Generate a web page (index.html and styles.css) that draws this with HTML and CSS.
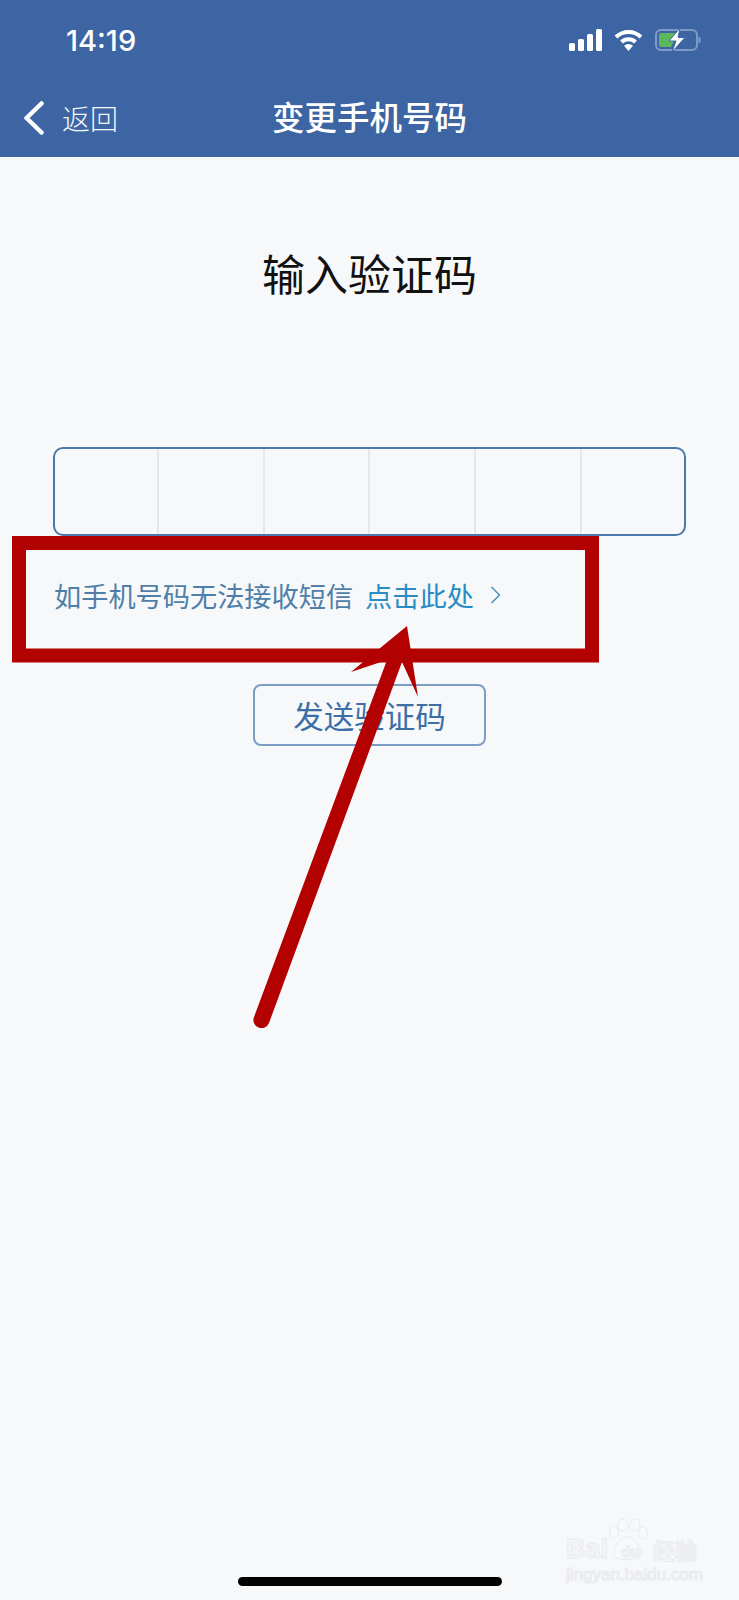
FILE: index.html
```html
<!DOCTYPE html>
<html lang="zh-CN">
<head>
  <meta charset="UTF-8" />
  <title>变更手机号码</title>
  <meta name="viewport" content="width=device-width, initial-scale=1.0"/>
  <link rel="stylesheet" href="styles.css">
</head>
<body>

<div class="screen">
  <header class="top">
    <div class="status-bar">
      <span class="time">14:19</span>
      <div class="status-icons">
        <svg class="icon-signal" width="33" height="22" viewBox="0 0 33 22">
          <rect x="0" y="14" width="6" height="8" rx="1.5"/>
          <rect x="9" y="10" width="6" height="12" rx="1.5"/>
          <rect x="18" y="5" width="6" height="17" rx="1.5"/>
          <rect x="27" y="0" width="6" height="22" rx="1.5"/>
        </svg>
        <svg class="icon-wifi" width="29" height="22" viewBox="0 0 29 22">
          <path d="M2 8 A18 18 0 0 1 27 8" />
          <path d="M7.5 13 A10.5 10.5 0 0 1 21.5 13" />
          <path class="wifi-dot" d="M14.5 22 L10 16.8 A6.5 6.5 0 0 1 19 16.8 Z"/>
        </svg>
        <svg class="icon-battery" width="47" height="24" viewBox="0 0 47 24">
          <rect class="batt-shell" x="1" y="2" width="41" height="20" rx="5"/>
          <path class="batt-fill" d="M6 5 H23 L16 19 H6 Q4 19 4 17 V7 Q4 5 6 5 Z"/>
          <path class="batt-cap" d="M44.5 9 V15"/>
          <path class="batt-bolt" d="M25 0 L14 13 H21 L17 24 L30 9.5 H23 Z"/>
        </svg>
      </div>
    </div>
    <nav class="nav-bar">
      <a class="back">
        <svg width="22" height="34" viewBox="0 0 22 34">
          <path d="M18.500 2.500 L3.500 17 L18.500 31.500"/>
        </svg>
        <span>返回</span>
      </a>
      <h1 class="nav-title">变更手机号码</h1>
    </nav>
  </header>

  <main class="content">
    <h2 class="heading">输入验证码</h2>

    <div class="code-box">
      <div class="code-cell"></div>
      <div class="code-cell"></div>
      <div class="code-cell"></div>
      <div class="code-cell"></div>
      <div class="code-cell"></div>
      <div class="code-cell"></div>
    </div>

    <div class="hint">
      <span>如手机号码无法接收短信</span>
      <a class="hint-link">点击此处</a>
      <svg class="hint-arrow" width="11" height="18" viewBox="0 0 11 18">
        <path d="M1.500 1 L9.500 9 L1.500 17"/>
      </svg>
    </div>

    <button class="send-btn">发送验证码</button>
  </main>

  <div class="home-bar"></div>

  <!-- annotation drawn on top of the screenshot -->
  <svg class="markup" width="739" height="1600" viewBox="0 0 739 1600">
    <rect class="markup-box" x="19" y="543" width="573" height="112.500"/>
    <path class="markup-arrow" d="M407 626 L418 697 L402 662 L269 1023 A8 8 0 0 1 254 1017 L387 660 L351 672 Z"/>
  </svg>

  <div class="watermark">
    <div class="wm-logo">
      <span>Bai</span>
      <svg class="wm-paw" width="42" height="44" viewBox="0 0 42 44">
        <ellipse cx="8" cy="14" rx="4.500" ry="6"/>
        <ellipse cx="17" cy="7" rx="5" ry="6"/>
        <ellipse cx="29" cy="7" rx="5" ry="6"/>
        <ellipse cx="37" cy="15" rx="4.500" ry="6"/>
        <path d="M21 19 C28 19 33 27 35 33 C36 40 29 42 21 41 C13 42 6 40 8 33 C10 27 14 19 21 19 Z"/>
      </svg>
      <span class="wm-du">du</span>
      <span class="wm-cn">经验</span>
    </div>
    <div class="wm-url">jingyan.baidu.com</div>
  </div>
</div>

</body>
</html>
```

FILE: styles.css
```css
* {
  box-sizing: border-box;
}

body {
  margin: 0;
  font-family: "Noto Sans CJK SC", "Noto Sans", sans-serif;
  background: #f6f8fa;
}

.screen {
  position: relative;
  width: 739px;
  height: 1600px;
  overflow: hidden;
  background: #f6f8fa;
}

.top {
  height: 157px;
  background: #3d65a3;
  color: #fff;
}

.status-bar {
  display: flex;
  justify-content: space-between;
  align-items: center;
  height: 80px;
  padding: 0 37px 0 66px;
}

.time {
  font-family: Inter, Roboto, sans-serif;
  font-size: 29px;
  font-weight: 500;
}

.status-icons {
  display: flex;
  align-items: center;
  gap: 12px;
}

.icon-signal {
  fill: #fff;
}

.icon-wifi path {
  fill: none;
  stroke: #fff;
  stroke-width: 4;
}

.icon-wifi .wifi-dot {
  fill: #fff;
  stroke: none;
}

.batt-shell {
  fill: none;
  stroke: #7f9ac6;
  stroke-width: 2;
}

.batt-fill {
  fill: #5cb85c;
}

.batt-cap {
  fill: none;
  stroke: #7f9ac6;
  stroke-width: 2;
}

.batt-bolt {
  fill: #fff;
  stroke: #3d65a3;
  stroke-width: 1;
}

.nav-bar {
  position: relative;
  display: flex;
  justify-content: center;
  height: 77px;
}

.back {
  position: absolute;
  left: 23px;
  top: 21px;
  display: flex;
  align-items: center;
  gap: 17px;
  font-size: 28px;
  font-weight: 300;
  line-height: 34px;
  color: #f2f5fa;
}

.back svg path {
  fill: none;
  stroke: #fff;
  stroke-width: 4.500;
  stroke-linecap: round;
  stroke-linejoin: round;
}

.nav-title {
  margin: 0;
  font-size: 32.500px;
  font-weight: 500;
  line-height: 71px;
}

.content {
  display: flex;
  flex-direction: column;
  align-items: center;
}

.heading {
  margin: 83px 0 0;
  font-size: 43px;
  font-weight: 400;
  line-height: 64px;
  color: #111;
}

.code-box {
  display: grid;
  grid-template-columns: 104px repeat(4, 105.700px) 1fr;
  width: 633px;
  height: 89px;
  margin-top: 143px;
  border: 2px solid #4a7aa8;
  border-radius: 10px;
}

.code-cell {
  border-right: 2px solid #e4e8ec;
}

.code-cell:last-child {
  border-right: none;
}

.hint {
  display: flex;
  align-items: center;
  align-self: flex-start;
  height: 40px;
  margin: 39px 0 0 54px;
  font-size: 27.200px;
  color: #4f7fa8;
}

.hint-link {
  margin-left: 12px;
  color: #2a8cc4;
}

.hint-arrow {
  margin-left: 16px;
  fill: none;
  stroke: #4f8fc0;
  stroke-width: 1.500;
}

.send-btn {
  width: 233px;
  height: 62px;
  margin-top: 69px;
  padding: 0;
  font-family: inherit;
  font-size: 30.500px;
  color: #3d6ea5;
  background: transparent;
  border: 2px solid #7d9dc4;
  border-radius: 8px;
}

.home-bar {
  position: absolute;
  left: 238px;
  bottom: 14px;
  width: 264px;
  height: 9px;
  border-radius: 5px;
  background: #000;
}

.markup {
  position: absolute;
  left: 0;
  top: 0;
}

.markup-box {
  fill: none;
  stroke: #b30000;
  stroke-width: 14;
}

.markup-arrow {
  fill: #b30000;
}

.watermark {
  position: absolute;
  left: 566px;
  top: 1518px;
  width: 140px;
  color: #f4f5f7;
  -webkit-text-stroke: 1px #e9ebee;
}

.wm-logo {
  display: flex;
  align-items: flex-end;
  height: 44px;
  font-family: "Liberation Sans", sans-serif;
  font-size: 27px;
  font-weight: 700;
  line-height: 26px;
}

.wm-paw {
  margin: 0 -35px 0 -2px;
  fill: #f8f9fb;
  stroke: #e9ebee;
  stroke-width: 1;
}

.wm-du {
  position: relative;
  width: 35px;
  font-size: 15px;
  text-align: center;
  line-height: 20px;
}

.wm-cn {
  margin-left: 5px;
  font-family: "Noto Sans CJK SC", sans-serif;
  font-size: 22px;
  line-height: 26px;
  white-space: nowrap;
}

.wm-url {
  margin-top: 2px;
  font-family: "Liberation Sans", sans-serif;
  font-size: 17px;
  line-height: 22px;
  white-space: nowrap;
}
```
